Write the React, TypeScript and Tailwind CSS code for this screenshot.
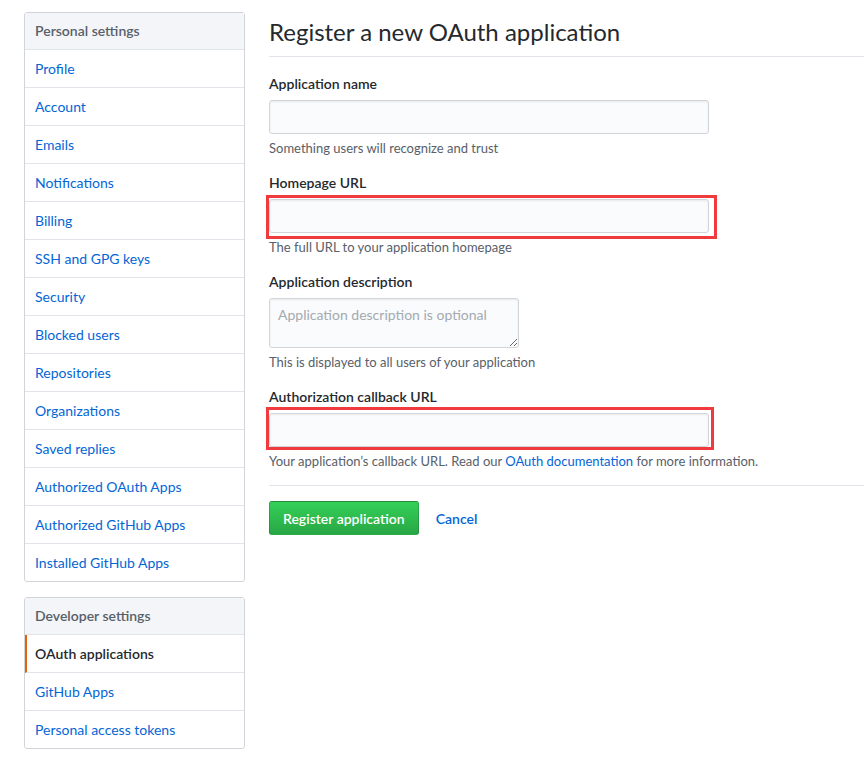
import React from 'react'

const personal = [
  'Profile',
  'Account',
  'Emails',
  'Notifications',
  'Billing',
  'SSH and GPG keys',
  'Security',
  'Blocked users',
  'Repositories',
  'Organizations',
  'Saved replies',
  'Authorized OAuth Apps',
  'Authorized GitHub Apps',
  'Installed GitHub Apps',
]

const developer = ['OAuth applications', 'GitHub Apps', 'Personal access tokens']

function Menu({ title, items, active }: { title: string; items: string[]; active?: string }) {
  return (
    <nav className="rounded-[3px] border border-[#d1d5da] bg-white">
      <div className="border-b border-[#e1e4e8] bg-[#f3f5f8] px-[10px] py-[8px] text-[14px] leading-[20px] font-semibold text-[#586069]">
        {title}
      </div>
      {items.map((item, i) => (
        <a
          key={item}
          href="#"
          className={`block px-[10px] py-[8px] text-[14px] leading-[21px] ${
            i < items.length - 1 ? 'border-b border-[#e1e4e8]' : ''
          } ${
            item === active
              ? 'border-l-2 border-l-[#e36209] pl-[8px] font-semibold text-[#24292e]'
              : 'text-[#0366d6]'
          }`}
        >
          {item}
        </a>
      ))}
    </nav>
  )
}

function Field({
  label,
  hint,
  children,
}: {
  label: string
  hint: React.ReactNode
  children: React.ReactNode
}) {
  return (
    <div className="mb-[14px]">
      <label className="mb-[6px] block text-[14px] leading-[21px] font-semibold text-[#24292e]">{label}</label>
      {children}
      <p className="mt-[5px] text-[13px] leading-[19px] text-[#586069]">{hint}</p>
    </div>
  )
}

const inputCls =
  'block h-[34px] w-[440px] rounded-[3px] border border-[#d1d5da] bg-[#fafbfc] px-[8px] text-[14px] shadow-[inset_0_1px_2px_rgba(27,31,35,0.075)] outline-none'

export default function App() {
  return (
    <div
      className="flex gap-[24px] bg-white pt-[12px] pl-[24px] text-[#24292e]"
      style={{ fontFamily: 'Lato, "Noto Sans", Arial, sans-serif' }}
    >
      <div className="flex w-[221px] shrink-0 flex-col gap-[15px]">
        <Menu title="Personal settings" items={personal} />
        <Menu title="Developer settings" items={developer} active="OAuth applications" />
      </div>

      <main className="flex-1">
        <div className="mb-[16px] border-b border-[#e1e4e8] pt-[2px] pb-[6px]">
          <h2 className="text-[24px] leading-[36px] font-normal">Register a new OAuth application</h2>
        </div>

        <Field label="Application name" hint="Something users will recognize and trust">
          <input className={inputCls} />
        </Field>

        <Field label="Homepage URL" hint="The full URL to your application homepage">
          <div className="relative w-[440px]">
            <input className={inputCls} />
            <div className="pointer-events-none absolute -top-[4px] -right-[8px] -bottom-[6px] -left-[3px] border-[3px] border-[#f03a3e]" />
          </div>
        </Field>

        <Field label="Application description" hint="This is displayed to all users of your application">
          <textarea
            placeholder="Application description is optional"
            className="block h-[50px] w-[250px] resize-y rounded-[3px] border border-[#d1d5da] bg-[#fafbfc] px-[8px] py-[6px] text-[14px] leading-[20px] shadow-[inset_0_1px_2px_rgba(27,31,35,0.075)] outline-none placeholder:text-[#a3aab1]"
          />
        </Field>

        <Field
          label="Authorization callback URL"
          hint={
            <>
              Your application’s callback URL. Read our{' '}
              <a href="#" className="text-[#0366d6]">
                OAuth documentation
              </a>{' '}
              for more information.
            </>
          }
        >
          <div className="relative w-[440px]">
            <input className={inputCls} />
            <div className="pointer-events-none absolute -top-[6px] -right-[5px] -bottom-[3px] -left-[3px] border-[3px] border-[#f03a3e]" />
          </div>
        </Field>

        <hr className="mt-[1px] mb-[15px] border-t border-[#e1e4e8]" />

        <div className="flex items-center gap-[17px]">
          <button className="h-[34px] rounded-[3px] border border-[rgba(27,31,35,0.2)] bg-gradient-to-b from-[#34d058] to-[#28a745] px-[13px] text-[14px] font-semibold text-white">
            Register application
          </button>
          <a href="#" className="text-[14px] font-semibold text-[#0366d6]">
            Cancel
          </a>
        </div>
      </main>
    </div>
  )
}
